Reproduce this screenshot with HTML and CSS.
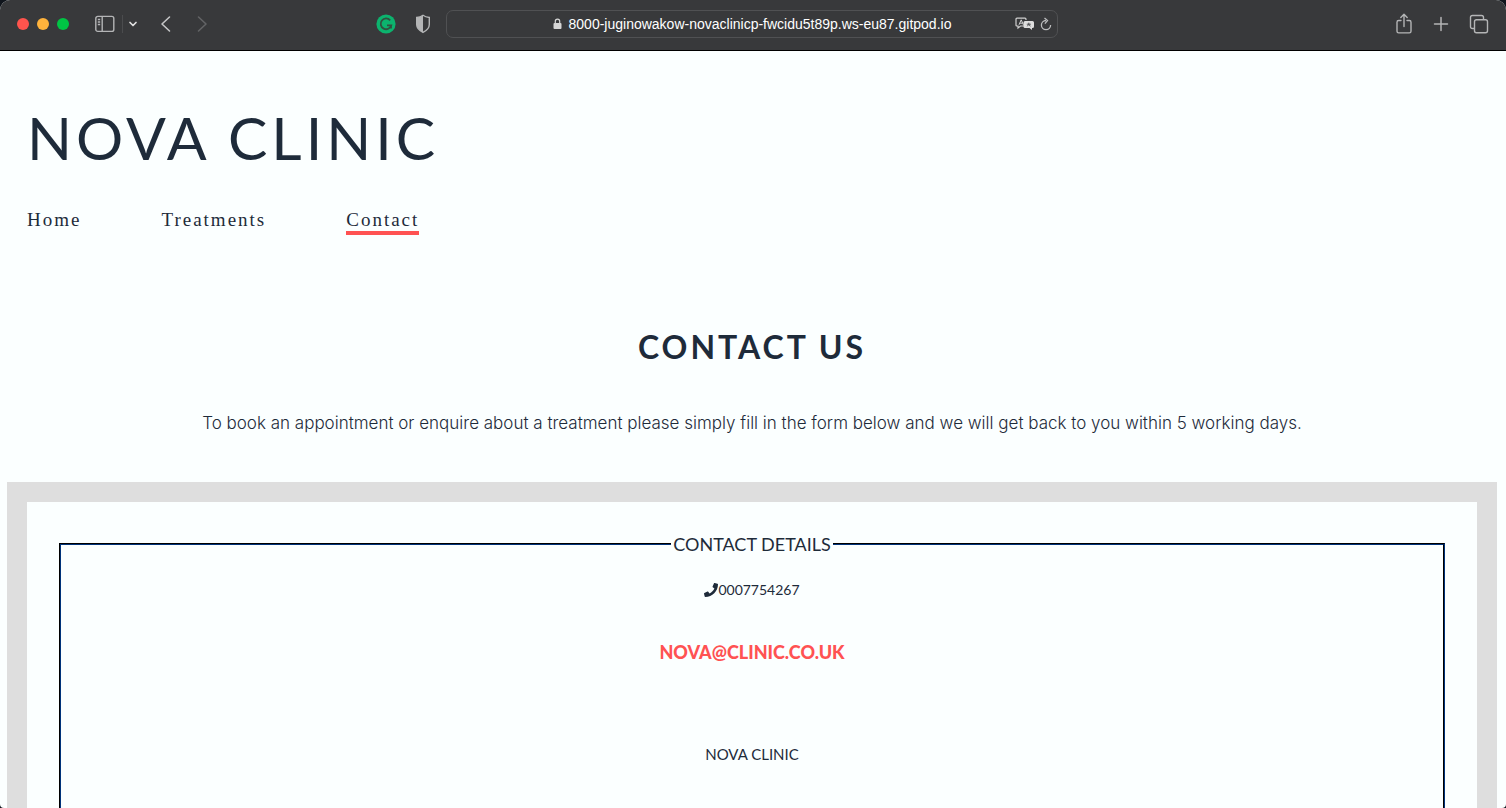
FILE: index.html
```html
<!DOCTYPE html>
<html lang="en">
<head>
<meta charset="utf-8">
<meta name="viewport" content="width=device-width, initial-scale=1">
<title>Nova Clinic - Contact</title>
<link rel="stylesheet" href="styles.css">
</head>
<body>
<div class="window">
  <div class="toolbar">
    <div class="tools tools-left">
      <div class="lights">
        <button class="light red" aria-label="Close"></button>
        <button class="light amber" aria-label="Minimise"></button>
        <button class="light green" aria-label="Zoom"></button>
      </div>
      <div class="sidebar-tools">
        <button class="tool" aria-label="Sidebar"><svg width="20" height="18" viewBox="0 0 20 18" fill="none" stroke="#b4b5b6" stroke-width="1.4"><rect x=".8" y="1.4" width="18" height="15" rx="2"/><path d="M7.2 1.5v15M2.8 4.5h2.4M2.8 7h2.4M2.8 9.500h2.400"/></svg></button>
        <span class="divider"></span>
        <button class="tool" aria-label="Tab groups"><svg width="10" height="8" viewBox="0 0 10 8" fill="none" stroke="#e0e0e0" stroke-width="1.7" stroke-linecap="round" stroke-linejoin="round"><path d="M2 2.500l3 3 3-3"/></svg></button>
      </div>
      <div class="history">
        <button class="tool" aria-label="Back"><svg width="12" height="18" viewBox="0 0 12 18" fill="none" stroke="#c4c5c6" stroke-width="1.600" stroke-linecap="round" stroke-linejoin="round"><path d="M9.500 2L2 9l7.500 7"/></svg></button>
        <button class="tool" aria-label="Forward"><svg width="12" height="18" viewBox="0 0 12 18" fill="none" stroke="#626365" stroke-width="1.600" stroke-linecap="round" stroke-linejoin="round"><path d="M2.500 2L10 9l-7.500 7"/></svg></button>
      </div>
    </div>
    <div class="centre">
      <button class="tool" aria-label="Grammar check"><svg width="20" height="20" viewBox="0 0 20 20"><circle cx="10" cy="10" r="9.600" fill="#0cb36e"/><path d="M14.200 6.300A5.400 5.400 0 1 0 15.300 11.300H11M15 10.500v4" fill="none" stroke="#31503f" stroke-width="1.800"/></svg></button>
      <button class="tool" aria-label="Privacy report"><svg width="16" height="20" viewBox="0 0 16 20"><path d="M8 1.300c2 1.500 4 2 6.300 2.200v7c0 3.500-3 6.200-6.300 7.900-3.300-1.700-6.300-4.400-6.300-7.900v-7C4 3.300 6 2.800 8 1.300z" fill="none" stroke="#b4b5b6" stroke-width="1.400"/><path d="M8 1.300v17.100c-3.300-1.700-6.300-4.400-6.300-7.900v-7C4 3.300 6 2.800 8 1.300z" fill="#b4b5b6"/></svg></button>
      <div class="address">
        <div class="url">
          <svg width="9" height="12" viewBox="0 0 9 12"><rect x=".5" y="5" width="8" height="6" rx="1" fill="#d6d6d6"/><path d="M2.300 5.500V3.300a2.200 2.200 0 0 1 4.400 0v2.200" fill="none" stroke="#d6d6d6" stroke-width="1.200"/></svg>
          <span>8000-juginowakow-novaclinicp-fwcidu5t89p.ws-eu87.gitpod.io</span>
        </div>
        <div class="address-tools">
          <button class="tool" aria-label="Translate"><svg width="20" height="14" viewBox="0 0 20 14"><path d="M9 9H5.500L3 11V9H2Q1 9 1 8V2.200q0-1 1-1h8q1 0 1 1V3" fill="none" stroke="#d0d0d0" stroke-width="1.200"/><path d="M4 7.800l2.200-5 2.200 5M4.800 6.200h2.800" fill="none" stroke="#d0d0d0" stroke-width="1"/><path d="M10 4h7.500q1.500 0 1.500 1.500v4q0 1.500-1.500 1.500H17v2l-2.500-2H10q-1.500 0-1.500-1.500v-4Q8.500 4 10 4z" fill="#dedede"/><path d="M11.800 7.200h4M13.800 5.700v1.500M12.300 9.300l1.500-2 1.500 2" fill="none" stroke="#444547" stroke-width=".9"/></svg></button>
          <button class="tool" aria-label="Reload"><svg width="12" height="14" viewBox="0 0 12 14" fill="none" stroke="#bcbdbe" stroke-width="1.300"><path d="M6 3.500a4.600 4.600 0 1 0 4.600 4.600M4.500 1l3 2.600-2.600 3"/></svg></button>
        </div>
      </div>
    </div>
    <div class="tools tools-right">
      <button class="tool" aria-label="Share"><svg width="18" height="22" viewBox="0 0 18 22" fill="none" stroke="#b4b5b6" stroke-width="1.400" stroke-linejoin="round" stroke-linecap="round"><path d="M6 7.500H3.700q-1.700 0-1.700 1.700v9q0 1.700 1.700 1.700h10.600q1.700 0 1.700-1.700v-9q0-1.700-1.700-1.700H12M9 13.500V1.500M5.800 4.500L9 1.300l3.200 3.200"/></svg></button>
      <button class="tool" aria-label="New tab"><svg width="16" height="16" viewBox="0 0 16 16" stroke="#b4b5b6" stroke-width="1.500" stroke-linecap="round"><path d="M8 1.500v13M1.500 8h13"/></svg></button>
      <button class="tool" aria-label="Show tabs"><svg width="20" height="20" viewBox="0 0 20 20" fill="none" stroke="#b4b5b6" stroke-width="1.400"><rect x="5.500" y="5.700" width="13" height="13" rx="2"/><path d="M5.500 14.500H3.500q-2 0-2-2v-9q0-2 2-2h9q2 0 2 2v2"/></svg></button>
    </div>
  </div>

  <div class="page">
    <header class="site-header">
      <h1 class="logo">NOVA CLINIC</h1>
      <nav class="menu">
        <a href="#home">Home</a>
        <a href="#treatments">Treatments</a>
        <a href="#contact" class="active" aria-current="page">Contact</a>
      </nav>
    </header>
    <main>
      <h2 class="title">CONTACT US</h2>
      <p class="intro">To book an appointment or enquire about a treatment please simply fill in the form below and we will get back to you within 5 working days.</p>
      <section class="frame">
        <fieldset class="details">
          <legend>CONTACT DETAILS</legend>
          <p class="phone"><svg width="14" height="14" viewBox="0 0 512 512" fill="#1e2b3a"><path d="M493.400 24.600l-104-24c-11.300-2.600-22.900 3.300-27.500 13.900l-48 112c-4.200 9.800-1.400 21.300 6.900 28l60.600 49.600c-36 76.700-98.900 140.500-177.200 177.200l-49.600-60.600c-6.800-8.300-18.200-11.100-28-6.900l-112 48C3.900 366.500-2 378.100.6 389.400l24 104C27.100 504.200 36.700 512 48 512c256.100 0 464-207.500 464-464 0-11.200-7.700-20.900-18.600-23.400z"/></svg>0007754267</p>
          <a class="email" href="mailto:nova@clinic.co.uk">NOVA@CLINIC.CO.UK</a>
          <p class="clinic">NOVA CLINIC</p>
        </fieldset>
      </section>
    </main>
  </div>
</div>
</body>
</html>
```
FILE: styles.css
```css
* { box-sizing: border-box; }

body {
  margin: 0;
  background: #10151c;
  color: #1e2b3a;
  font-family: Lato, sans-serif;
}

.window {
  height: 100vh;
  overflow: hidden;
  display: flex;
  flex-direction: column;
  background: #fbffff;
  border-radius: 10px 10px 4px 4px;
}

/* Browser toolbar */
.toolbar {
  flex: none;
  display: grid;
  grid-template-columns: 1fr auto 1fr;
  align-items: center;
  height: 51px;
  padding: 0 17px 3px;
  background: #38393b;
  border-bottom: 1px solid #000;
}

.tools, .lights, .sidebar-tools, .history, .centre, .url, .address-tools {
  display: flex;
  align-items: center;
}

.tool {
  display: flex;
  padding: 0;
  border: 0;
  background: none;
}

.tools-left { gap: 26px; }
.lights { gap: 8px; }

.light {
  width: 12px;
  height: 12px;
  padding: 0;
  border: 0;
  border-radius: 50%;
}

.red { background: #ff544d; }
.amber { background: #ffb33c; }
.green { background: #00c544; }

.sidebar-tools { gap: 5px; }
.divider { width: 1px; height: 18px; margin-left: 2px; background: #4b4c4e; }
.history { gap: 24px; margin-left: -4px; }

.centre { gap: 19px; margin-right: 72px; }

.address {
  display: grid;
  grid-template-columns: 1fr auto 1fr;
  align-items: center;
  width: 612px;
  height: 28px;
  margin-left: -4px;
  padding: 0 5px;
  border: 1px solid #505153;
  border-radius: 7px;
}

.url {
  grid-column: 2;
  gap: 7px;
  color: #fff;
  font: 500 14px/18px "Liberation Sans", sans-serif;
}

.address-tools { justify-content: flex-end; gap: 5px; }
.tools-right { justify-content: flex-end; gap: 20px; }

/* Site */
.page { padding: 0 9px 0 7px; }

.site-header { padding: 51px 20px 0; }

.logo {
  margin: 0;
  font-size: 59px;
  line-height: 72px;
  font-weight: 400;
  letter-spacing: 4px;
}

.menu {
  display: flex;
  gap: 80px;
  margin-top: 35px;
  font: 19px/22px "Liberation Serif", serif;
  letter-spacing: 2px;
}

.menu a { color: inherit; text-decoration: none; border-bottom: 4px solid transparent; }
.menu .active { border-color: #ff5252; }

.title {
  margin: 92px 0 0;
  text-align: center;
  font-size: 32px;
  line-height: 40px;
  font-weight: 700;
  letter-spacing: 3px;
}

.intro {
  margin: 44px 0 47px;
  text-align: center;
  font: 300 17px/24px Inter, sans-serif;
}

.frame { padding: 32px; border: 20px solid #dedede; }

.details {
  margin: 0;
  padding: 26px 0 60px;
  border: 2px groove #001026;
  text-align: center;
}

.details legend {
  margin: 0 auto;
  padding: 0 2px;
  font-size: 18px;
  line-height: 20px;
}

.phone, .clinic { margin: 0; line-height: 20px; }
.phone { display: flex; justify-content: center; align-items: center; font-size: 14px; }
.clinic { font-size: 15px; }

.email {
  display: block;
  margin: 41px 0 81px;
  color: #ff5252;
  font-size: 18px;
  line-height: 22px;
  font-weight: 900;
  text-decoration: none;
}
```
